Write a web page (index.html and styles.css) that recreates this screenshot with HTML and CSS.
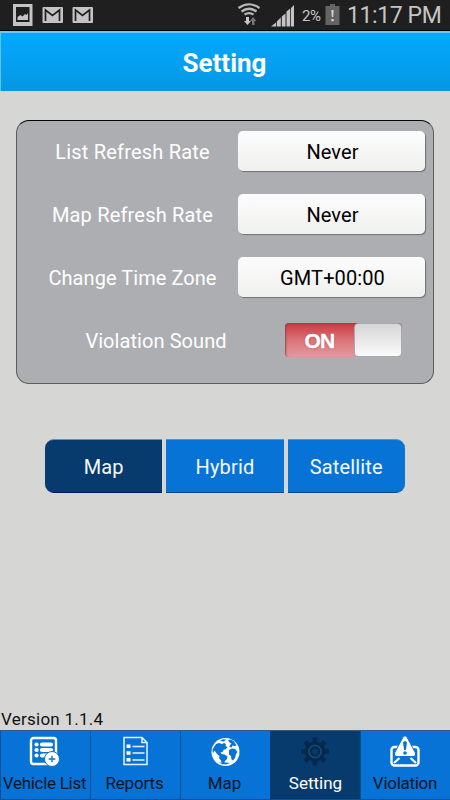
FILE: index.html
```html
<!DOCTYPE html>
<html lang="en">
<head>
<meta charset="utf-8">
<title>Setting</title>
<link rel="stylesheet" href="styles.css">
</head>
<body>
<div class="status">
  <svg class="notices" width="84" height="30" viewBox="0 0 84 30">
    <path fill="#c4c4c4" fill-rule="evenodd" d="M0 4h19.500v22H0zM3 7v15h13.500V7z"/>
    <path fill="#c4c4c4" d="M4.500 20v-3l3-2 2 1.500 2.500-2.500 1.500 1 1.500-2v7z"/>
    <g id="mail"><rect x="29.500" y="7" width="20.500" height="16" rx="1" fill="#c4c4c4"/><path d="M32.500 21V10l7 5.500 7-5.500v11" fill="none" stroke="#202020" stroke-width="1.700"/></g>
    <use href="#mail" x="30"/>
  </svg>
  <svg class="signals" width="60" height="30" viewBox="0 0 60 30">
    <g fill="none" stroke="#b9b9b9" stroke-width="2.200"><path d="M1.500 8Q12 .5 22.500 8M4.500 11.500Q12 6 19.500 11.500M7.500 14.700Q12 11.500 16.500 14.700"/></g>
    <path fill="#c8c8c8" d="M9 17h3v4h2l-3.500 4L7 21h2z"/><path fill="#777" d="M15 25v-4h-2l3-4 3.500 4h-2v4z"/>
    <path fill="#c4c4c4" d="M34 26.500l5-4v4zM39.800 21.500l4-4v9h-4zM44.800 16.500l3.700-3v13h-3.700zM49.500 11.500l3.700-3v18h-3.700zM54 8l3-3v21.500h-3z"/>
  </svg>
  <span class="percent">2%</span>
  <svg class="battery" width="15" height="30" viewBox="0 0 15 30"><path fill="#646464" d="M5 4h5v2h4.500v19H.5V6H5z"/><path fill="#d0d0d0" d="M6.300 10h2.400l-.5 7H6.800zM6.300 19h2.400v2.200H6.300z"/></svg>
  <span class="clock">11:17 PM</span>
</div>
<header class="header"><h1>Setting</h1></header>
<main class="main">
  <section class="card">
    <div class="row"><span class="label l1">List Refresh Rate</span><button class="value">Never</button></div>
    <div class="row"><span class="label l2">Map Refresh Rate</span><button class="value">Never</button></div>
    <div class="row"><span class="label l3">Change Time Zone</span><button class="value gmt">GMT+00:00</button></div>
    <div class="row sound"><span class="label l4">Violation Sound</span><div class="toggle"><span class="on">ON</span><span class="knob"></span></div></div>
  </section>
  <div class="segments">
    <button class="segment selected">Map</button><button class="segment">Hybrid</button><button class="segment">Satellite</button>
  </div>
  <p class="version">Version 1.1.4</p>
</main>
<nav class="tabs">
  <a class="tab"><svg class="list-icon" width="32" height="32" viewBox="0 0 32 32"><rect x="3" y="2" width="25" height="26" rx="2.500" fill="none" stroke="#fff" stroke-width="2.400"/><g stroke="#fff" stroke-width="4.200" stroke-linecap="round"><path d="M8.500 8.500h.1M14 8.500h9M8.500 14h.1M14 14h9M8.500 19.500h.1M14 19.500h5"/></g><circle cx="24" cy="23" r="7.500" fill="#fff" stroke="#0773d7"/><path d="M24 19.700v6.600M20.700 23h6.600" stroke="#0773d7" stroke-width="1.400"/></svg><span class="t1">Vehicle List</span></a>
  <a class="tab"><svg width="32" height="32" viewBox="0 0 32 32"><g fill="none" stroke="#e6f4ff" stroke-width="1.500"><path d="M4 1.500h18l5 5v22H4zM22 1.500v5h5M12.500 10.500h12M12.500 17h12M12.500 24h12"/></g><path fill="#fff" d="M6.500 8.500h4V12h-4zM6.500 15.200h4v3.500h-4zM6.500 22h4v3.500h-4z"/></svg><span class="t2">Reports</span></a>
  <a class="tab"><svg width="32" height="32" viewBox="0 0 32 32"><circle cx="15.500" cy="16" r="14" fill="#fff"/><path fill="#0773d7" d="M4 11l2-3 3-1 3 1 2-1 2 1-.5 2 2 1-1.500 2-2.500 1-1 2-2 .5 1 1.500 3 .5 3 2-.5 2.500-2 2-1 3-2 .5-1-4-2-2.500.5-2-2.500-2-2.500-3.500-1.500 3-.5-4zM10 5l3-1.800 3 .3-2 2zM18 4l3-.5 3 2 2.500 4-2 .5-2-.5-1 2-2-.5.5-2 1.500-1.500-2-1zM19 14l3-1.500 3 .5 2.500 3-1.500 2-1 4-2 2.500-1.500-1-.5-3.500-2-1.500zM8 26l4 1 4-.5 4 .5-4 1.500-4-.5z"/></svg><span class="t3">Map</span></a>
  <a class="tab active"><svg width="32" height="32" viewBox="0 0 32 32"><g fill="none" stroke="#06284b"><circle cx="15" cy="15.500" r="8.600" stroke-width="3"/><circle cx="15" cy="15.500" r="4" stroke-width="2"/><path stroke-width="4.600" d="M15 1.500v5M15 24.500v5M1 15.500h5M24 15.500h5M5.100 5.600l3.500 3.500M21.400 21.900l3.500 3.500M5.100 25.400l3.500-3.500M21.400 9.100l3.500-3.500"/></g><circle cx="15" cy="15.500" r="6.200" fill="none" stroke="#234d77" stroke-width="1"/></svg><span class="t4">Setting</span></a>
  <a class="tab"><svg width="32" height="32" viewBox="0 0 32 32"><rect x="1.500" y="11" width="27" height="18.500" rx="3" fill="none" stroke="#fff" stroke-width="2.400"/><path d="M9.500 22L4 27M20.500 22l5.500 5" stroke="#fff" stroke-width="2.200"/><path d="M12.800 1.500q2.200-3.500 4.400 0L25.500 17q1 3-2 3.500h-17q-3-.5-2-3.500z" fill="#fff" stroke="#0773d7"/><path d="M13 6.500q2-3 4 0L15.900 14h-1.800z" fill="#0773d7"/><circle cx="15" cy="17" r="1.800" fill="#0773d7"/></svg><span class="t5">Violation</span></a>
</nav>
</body>
</html>
```
FILE: styles.css
```css
* { box-sizing: border-box; }
body { margin: 0; width: 450px; height: 800px; display: flex; flex-direction: column; overflow: hidden; background: #d6d6d4; font-family: Roboto, sans-serif; }
button { font: inherit; border: 0; padding: 0; margin: 0; }
.status { height: 31px; flex: none; display: flex; background: #1f1f1f; border-bottom: 1px solid #050505; color: #c5c5c5; padding-left: 13px; line-height: 30px; white-space: nowrap; }
.notices { flex: none; }
.signals { flex: none; margin-left: 140px; }
.percent { width: 19px; margin-left: 5px; font-size: 15px; line-height: 32px; letter-spacing: -.4px; }
.battery { flex: none; margin-left: 4px; }
.clock { margin-left: 7px; font-size: 23px; letter-spacing: -.4px; line-height: 31px; }
.header { height: 60px; flex: none; display: flex; align-items: center; justify-content: center; background: linear-gradient(#03a9ff, #0597e2); border-top: 2px solid #67c9fa; border-left: 1px solid #5dc5f5; }
h1 { margin: 1px 2px 0 0; color: #fff; font-size: 26px; line-height: 30px; letter-spacing: 0; }
.main { flex: 1; display: flex; flex-direction: column; padding: 29px 16px 0; }
.card { height: 264px; flex: none; padding: 10px 8px 0 7px; display: flex; flex-direction: column; gap: 23px; background: #adaeb2; border: 1px solid #5c5e5d; border-top-color: #050505; border-radius: 13px; }
.row { height: 40px; display: flex; align-items: center; justify-content: space-between; }
.label { width: 216px; text-align: center; color: #fff; font-size: 20px; padding-top: 1px; }
.l1 { letter-spacing: .2px; padding-left: 3px; }
.l2 { letter-spacing: .18px; padding-left: 3px; }
.l3 { letter-spacing: .06px; padding-left: 3px; }
.value { width: 187px; height: 40px; flex: none; border-radius: 5px; background: linear-gradient(#fcfcfc, #f0f0ef); color: #000; font-size: 20px; padding: 2px 0 0 2px; box-shadow: 1px 1px 1px #707070; letter-spacing: .1px; }
.sound { padding-left: 24px; padding-right: 23px; }
.sound .label { width: 216px; letter-spacing: .07px; }
.toggle { width: 117px; height: 34px; display: flex; flex: none; border-radius: 4px; background: linear-gradient(#c93940, #da7479 50%, #e29b9f); box-shadow: inset 1px 1px 2px #9f3f4d; margin-top: -1px; }
.on { width: 69px; text-align: center; color: #fff; font: bold 21px/35px "Liberation Sans", sans-serif; letter-spacing: -.8px; text-shadow: 0 0 2px #a7333a; -webkit-text-stroke: .4px #fff; }
.knob { width: 48px; height: 34px; border: 1px solid #aaa8af; border-radius: 4px; background: linear-gradient(#d5d5d5, #fafafa); }
.segments { height: 54px; flex: none; margin: 55px 29px 0; display: flex; gap: 4px; }
.segment { flex: 1; color: #f4faff; background: #0773d7; font-size: 20px; letter-spacing: .15px; border-top: 1px solid #6a8db0; border-bottom: 1px solid #064a91; padding-top: 1px; }
.segment:first-child { border-radius: 9px 0 0 9px; }
.segment:last-child { border-radius: 0 9px 9px 0; }
.segment.selected { background: #073b6d; border-bottom-color: #031a5e; }
.version { margin: auto 0 0 -15px; font-size: 17px; line-height: 22px; color: #111; letter-spacing: .25px; }
.tabs { height: 70px; flex: none; display: flex; background: #0773d7; border-top: 1px solid #38597a; border-bottom: 1px solid #07519a; }
.tab { width: 90px; display: flex; flex-direction: column; align-items: center; padding-top: 5px; border-left: 1px solid #075096; font-size: 17px; line-height: 22px; color: #051522; white-space: nowrap; }
.tab svg { flex: none; }
.list-icon { margin-left: -4px; }
.tab span { margin-top: 4px; }
.tab .t1 { letter-spacing: -.28px; margin-left: -2px; }
.tab .t2, .tab .t5 { letter-spacing: -.15px; margin-left: -2px; }
.tab .t3 { margin-left: -2px; }
.tab .t5 { margin-left: -1px; letter-spacing: -.28px; }
.active { background: #073b6d; color: #fff; border-color: #073b6d; }
```
